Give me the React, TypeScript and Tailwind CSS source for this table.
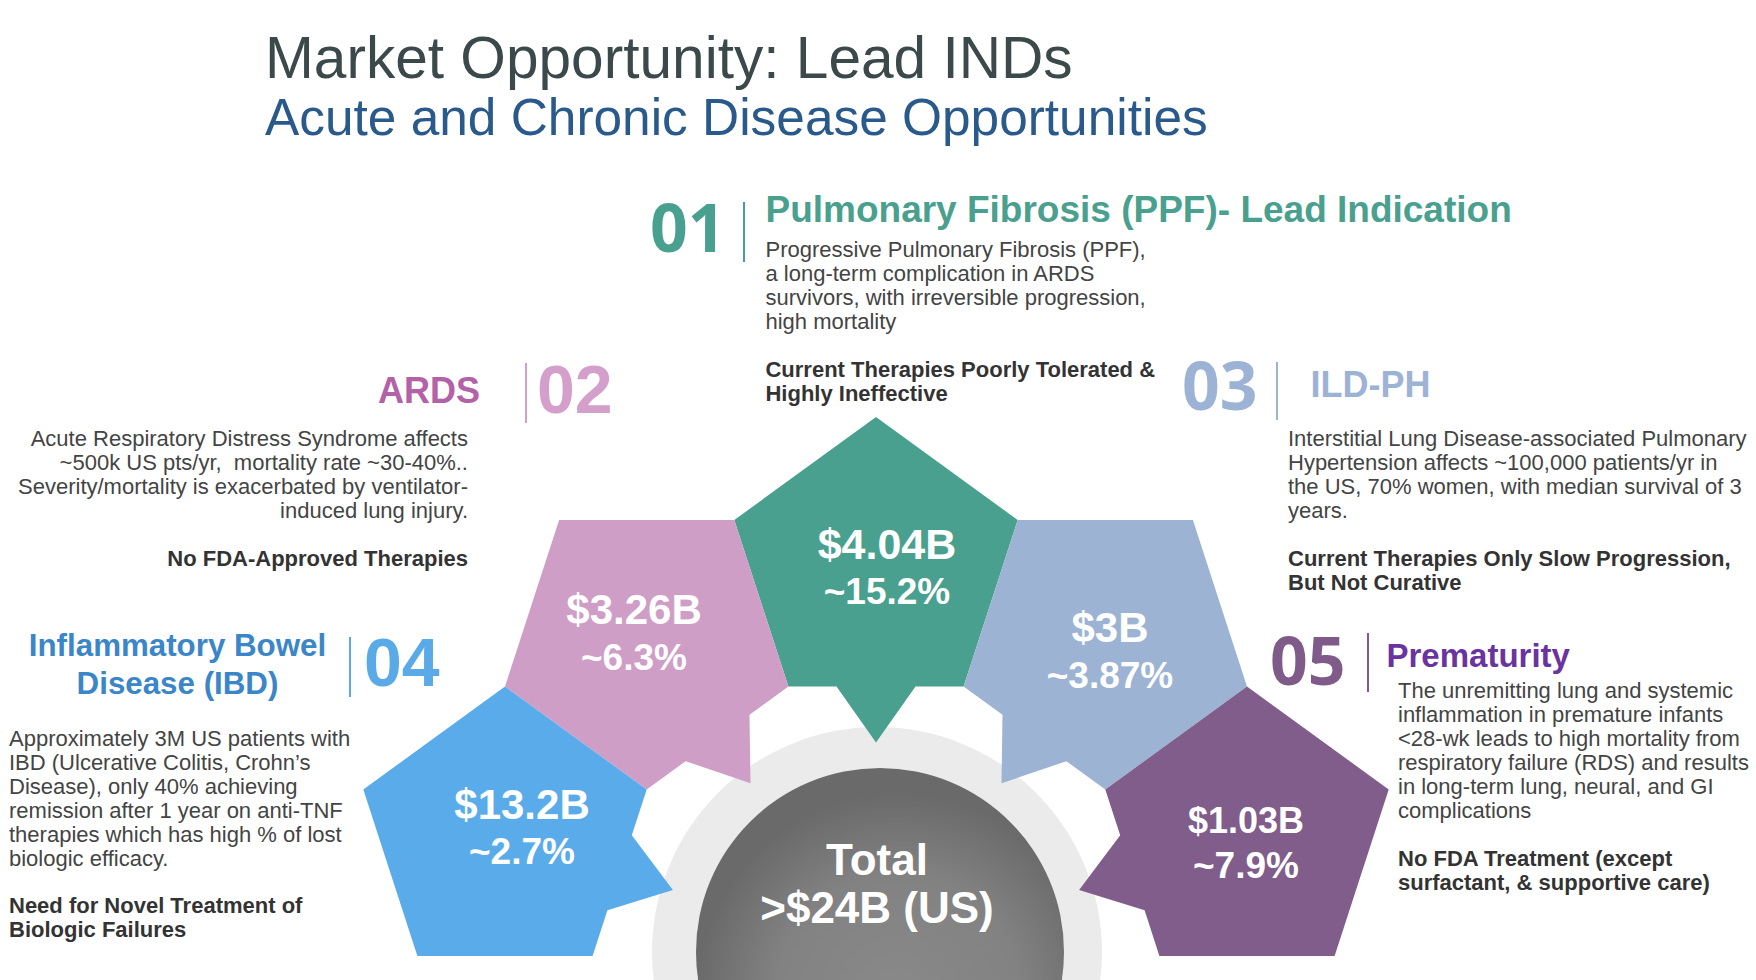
type Pt = [number, number];

const R = 149;
const rad = (d: number) => (d * Math.PI) / 180;

// regular pentagon with a small pointer on one edge, aimed at the centre circle
function shape(cx: number, cy: number, rot: number, edge: number): string {
  const v: Pt[] = [0, 1, 2, 3, 4].map((k) => [
    cx + R * Math.cos(rad(rot + 72 * k)),
    cy + R * Math.sin(rad(rot + 72 * k)),
  ]);
  const pts: Pt[] = [];
  for (let k = 0; k < 5; k++) {
    pts.push(v[k]);
    if (k === edge) {
      const a = v[k];
      const b = v[(k + 1) % 5];
      const len = Math.hypot(b[0] - a[0], b[1] - a[1]);
      const ux = (b[0] - a[0]) / len;
      const uy = (b[1] - a[1]) / len;
      const mx = (a[0] + b[0]) / 2;
      const my = (a[1] + b[1]) / 2;
      const nl = Math.hypot(mx - cx, my - cy);
      pts.push([mx - ux * 39.5, my - uy * 39.5]);
      pts.push([mx + ((mx - cx) / nl) * 56, my + ((my - cy) / nl) * 56]);
      pts.push([mx + ux * 39.5, my + uy * 39.5]);
    }
  }
  return pts.map((p) => p.map((n) => n.toFixed(1)).join(',')).join(' ');
}

const shapes = [
  { fill: '#4aa08f', cx: 876, cy: 566, rot: -90, edge: 2, tx: 887, b1: 559, b2: 604, f1: 43, v: '$4.04B', p: '~15.2%' },
  { fill: '#cf9ec7', cx: 646.7, cy: 640.5, rot: 90, edge: 4, tx: 634, b1: 624, b2: 670, f1: 42, v: '$3.26B', p: '~6.3%' },
  { fill: '#9db3d4', cx: 1105.3, cy: 640.5, rot: 90, edge: 0, tx: 1110, b1: 642, b2: 688, f1: 42, v: '$3B', p: '~3.87%' },
  { fill: '#5aabe9', cx: 505, cy: 835.5, rot: -90, edge: 1, tx: 522, b1: 819, b2: 864, f1: 42, v: '$13.2B', p: '~2.7%' },
  { fill: '#805d8a', cx: 1247, cy: 835.5, rot: -90, edge: 3, tx: 1246, b1: 833, b2: 878, f1: 36, v: '$1.03B', p: '~7.9%' },
];

const Diagram = () => (
  <svg className="absolute left-0 top-0" width="1756" height="980" viewBox="0 0 1756 980">
    <defs>
      <radialGradient id="core" cx="0.55" cy="0.62" r="0.55">
        <stop offset="0" stopColor="#898989" />
        <stop offset="0.6" stopColor="#828282" />
        <stop offset="1" stopColor="#6a6a6a" />
      </radialGradient>
    </defs>
    <circle cx="877" cy="952" r="225" fill="#ebebeb" />
    <circle cx="880" cy="952" r="184" fill="url(#core)" />
    {shapes.map((s) => (
      <polygon key={s.v} points={shape(s.cx, s.cy, s.rot, s.edge)} fill={s.fill} />
    ))}
    <g fill="#ffffff" fontFamily="'Liberation Sans', Arial, sans-serif" fontWeight="700" textAnchor="middle">
      {shapes.map((s) => (
        <g key={s.v}>
          <text x={s.tx} y={s.b1} fontSize={s.f1}>{s.v}</text>
          <text x={s.tx} y={s.b2} fontSize="37">{s.p}</text>
        </g>
      ))}
      <text x="877" y="875" fontSize="44">Total</text>
      <text x="877" y="923" fontSize="44">&gt;$24B (US)</text>
    </g>
  </svg>
);

const Lines = ({ lines }: { lines: string[] }) => (
  <>
    {lines.map((l) => (
      <span key={l} className="block whitespace-pre">{l}</span>
    ))}
  </>
);

const num = "font-['Open_Sans',sans-serif] text-[66px] font-bold leading-[66px]";
const numArial = 'text-[68px] font-bold leading-[68px]';
const body = 'text-[22px] leading-[24px] text-[#444444]';
const bold = 'text-[22px] font-bold leading-[24px] text-[#333333]';

export default function App() {
  return (
    <div className="relative h-[980px] w-[1756px] overflow-hidden bg-white font-['Liberation_Sans',Arial,sans-serif]">
      <Diagram />

      <header className="relative pl-[265px] pt-[28px]">
        <h1 className="text-[58.6px] leading-[59px] text-[#3c494b]">Market Opportunity: Lead INDs</h1>
        <h2 className="mt-[5px] text-[51.4px] leading-[51px] text-[#295a8b]">Acute and Chronic Disease Opportunities</h2>
      </header>

      {/* 01 */}
      <div className="absolute left-[650px] top-[190px] flex items-start">
        <span className={`mt-[3px] text-[#4aa08e] ${num}`}>01</span>
        <span className="ml-[18px] mt-[12px] h-[60px] w-[2px] bg-[#4aa08e]" />
        <div className="ml-[20px]">
          <h3 className="mt-[2px] whitespace-nowrap text-[37px] font-bold leading-[36px] text-[#4aa08e]">
            Pulmonary Fibrosis (PPF)- Lead Indication
          </h3>
          <p className={`mt-[10px] ${body}`}>
            <Lines lines={['Progressive Pulmonary Fibrosis (PPF),', 'a long-term complication in ARDS', 'survivors, with irreversible progression,', 'high mortality']} />
          </p>
          <p className={`mt-[24px] ${bold}`}>
            <Lines lines={['Current Therapies Poorly Tolerated &', 'Highly Ineffective']} />
          </p>
        </div>
      </div>

      {/* 02 */}
      <div className="absolute left-[378px] top-[355px] flex items-start">
        <span className="mt-[18px] text-[36px] font-bold leading-[36px] text-[#b362a8]">ARDS</span>
        <span className="ml-[45px] mt-[8px] h-[60px] w-[2px] bg-[#d4a0cb]" />
        <span className={`ml-[10px] text-[#d4a0cb] ${numArial}`}>02</span>
      </div>
      <div className="absolute left-0 top-[427px] w-[468px] text-right">
        <p className={body}>
          <Lines lines={['Acute Respiratory Distress Syndrome affects', '~500k US pts/yr,  mortality rate ~30-40%..', 'Severity/mortality is exacerbated by ventilator-', 'induced lung injury.']} />
        </p>
        <p className={`mt-[24px] ${bold}`}>No FDA-Approved Therapies</p>
      </div>

      {/* 03 */}
      <div className="absolute left-[1182px] top-[351px] flex items-start">
        <span className={`text-[#9db3d5] ${num}`}>03</span>
        <span className="ml-[19px] mt-[11px] h-[58px] w-[2px] bg-[#9db3d5]" />
        <span className="ml-[32px] mt-[16px] text-[36px] font-bold leading-[36px] text-[#9db3d5]">ILD-PH</span>
      </div>
      <div className="absolute left-[1288px] top-[427px]">
        <p className={body}>
          <Lines lines={['Interstitial Lung Disease-associated Pulmonary', 'Hypertension affects ~100,000 patients/yr in', 'the US, 70% women, with median survival of 3', 'years.']} />
        </p>
        <p className={`mt-[24px] ${bold}`}>
          <Lines lines={['Current Therapies Only Slow Progression,', 'But Not Curative']} />
        </p>
      </div>

      {/* 04 */}
      <div className="absolute left-0 top-[625px] flex items-start">
        <h3 className="mt-[2px] w-[349px] pl-[6px] text-center text-[31.3px] font-bold leading-[38px] text-[#3b86c8]">
          Inflammatory Bowel
          <br />
          Disease (IBD)
        </h3>
        <span className="mt-[12px] h-[60px] w-[2px] bg-[#5aaae8]" />
        <span className={`ml-[13px] mt-[3px] text-[#5aaae8] ${numArial}`}>04</span>
      </div>
      <div className="absolute left-[9px] top-[727px]">
        <p className={body}>
          <Lines lines={['Approximately 3M US patients with', 'IBD (Ulcerative Colitis, Crohn\u2019s', 'Disease), only 40% achieving', 'remission after 1 year on anti-TNF', 'therapies which has high % of lost', 'biologic efficacy.']} />
        </p>
        <p className={`mt-[23px] ${bold}`}>
          <Lines lines={['Need for Novel Treatment of', 'Biologic Failures']} />
        </p>
      </div>

      {/* 05 */}
      <div className="absolute left-[1270px] top-[626px] flex items-start">
        <span className={`text-[#7f5b8a] ${num}`}>05</span>
        <span className="ml-[22px] mt-[7px] h-[59px] w-[2px] bg-[#7f5b8a]" />
        <span className="ml-[17px] mt-[13px] text-[33px] font-bold leading-[33px] text-[#6a34a0]">Prematurity</span>
      </div>
      <div className="absolute left-[1398px] top-[679px]">
        <p className={body}>
          <Lines lines={['The unremitting lung and systemic', 'inflammation in premature infants', '<28-wk leads to high mortality from', 'respiratory failure (RDS) and results', 'in long-term lung, neural, and GI', 'complications']} />
        </p>
        <p className={`mt-[24px] ${bold}`}>
          <Lines lines={['No FDA Treatment (except', 'surfactant, & supportive care)']} />
        </p>
      </div>
    </div>
  );
}
